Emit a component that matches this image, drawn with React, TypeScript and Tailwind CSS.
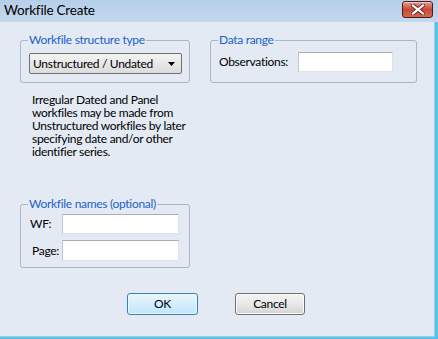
import React from "react";

function TextBox({ className = "" }: { className?: string }) {
  return (
    <div
      className={
        "h-[20px] bg-white border border-[#dfe3e8] border-t-[#abadb3] border-l-[#c2c6cc] " +
        className
      }
    />
  );
}

function Group({
  title,
  className = "",
  children,
}: {
  title: string;
  className?: string;
  children: React.ReactNode;
}) {
  return (
    <fieldset
      className={"border border-[#a9b6c6] rounded-[3px] px-[7px] m-0 min-w-0 " + className}
    >
      <legend className="px-[1px] text-[#1e5fc8] leading-[16px]">{title}</legend>
      {children}
    </fieldset>
  );
}

function CloseButton() {
  return (
    <div className="w-[31px] h-[17px] mt-[1px] rounded-[3px] border border-[#4e1b1b] bg-gradient-to-b from-[#e59a8c] via-[#c9473a] to-[#d26a4c] flex items-center justify-center shadow-[inset_0_1px_0_rgba(255,255,255,0.45)]">
      <svg width="14" height="11" viewBox="0 0 14 11">
        <path
          d="M2 1.5 L12 9.5 M12 1.5 L2 9.5"
          stroke="#6b2a2a"
          strokeWidth="4"
          strokeLinecap="square"
        />
        <path
          d="M2 1.5 L12 9.5 M12 1.5 L2 9.5"
          stroke="#ffffff"
          strokeWidth="2.2"
          strokeLinecap="square"
        />
      </svg>
    </div>
  );
}

export default function App() {
  return (
    <div
      className="w-[438px] h-[339px] flex flex-col bg-[#e3eaf3] text-black text-[12px] tracking-[-0.3px] overflow-hidden"
      style={{ fontFamily: 'Lato, "Noto Sans", sans-serif' }}
    >
      {/* Title bar */}
      <div className="h-[22px] shrink-0 flex items-start justify-between pl-[4px] pr-[5px] bg-gradient-to-b from-[#b6cfe9] to-[#c4d7ed]">
        <span className="text-[13.5px] leading-[21px] tracking-[-0.2px]">Workfile Create</span>
        <CloseButton />
      </div>

      {/* Body */}
      <div className="flex-1 flex border-r-[3px] border-b-[2px] border-[#4cc6ee]">
        <div className="flex-1 border-r border-b border-[#b7c6d6] flex flex-col pt-[10px] pl-[20px]">
          <div className="flex gap-[20px] items-start">
            <Group title="Workfile structure type" className="w-[170px] h-[51px]">
              <div className="mt-[5px] ml-[1px] h-[21px] w-[153px] rounded-[2px] border border-[#707070] bg-gradient-to-b from-[#f4f4f4] to-[#dcdcdc] flex items-center justify-between pl-[3px] pr-[6px]">
                <span className="leading-[14px]">Unstructured / Undated</span>
                <svg width="7" height="4" viewBox="0 0 7 4">
                  <path d="M0 0 H7 L3.5 4 Z" fill="#000" />
                </svg>
              </div>
            </Group>

            <Group title="Data range" className="w-[207px] h-[51px]">
              <div className="mt-[4px] flex items-center">
                <span className="w-[80px] pl-[1px]">Observations:</span>
                <TextBox className="w-[95px] h-[19px]" />
              </div>
            </Group>
          </div>

          <p className="mt-[10px] ml-[12px] w-[156px] leading-[13px]">
            Irregular Dated and Panel workfiles may be made from Unstructured workfiles by later
            specifying date and/or other identifier series.
          </p>

          <Group title="Workfile names (optional)" className="mt-[38px] w-[170px] h-[72px]">
            <div className="mt-[2px] flex flex-col gap-[6px]">
              <div className="flex items-center">
                <span className="w-[34px] pl-[2px]">WF:</span>
                <TextBox className="w-[117px] h-[20px]" />
              </div>
              <div className="flex items-center">
                <span className="w-[34px] pl-[4px]">Page:</span>
                <TextBox className="w-[117px] h-[21px]" />
              </div>
            </div>
          </Group>

          <div className="mt-[25px] ml-[107px] flex gap-[37px]">
            <button className="w-[71px] h-[22px] rounded-[3px] border border-[#3c7fb1] bg-gradient-to-b from-[#eaf6fd] to-[#bee6fd] shadow-[inset_0_0_0_1px_#e8f6fd]">
              OK
            </button>
            <button className="w-[70px] h-[22px] rounded-[3px] border border-[#707070] bg-gradient-to-b from-[#f3f3f3] via-[#e9e9e9] to-[#d3d3d3] shadow-[inset_0_0_0_1px_#fcfcfc]">
              Cancel
            </button>
          </div>
        </div>
      </div>
    </div>
  );
}
